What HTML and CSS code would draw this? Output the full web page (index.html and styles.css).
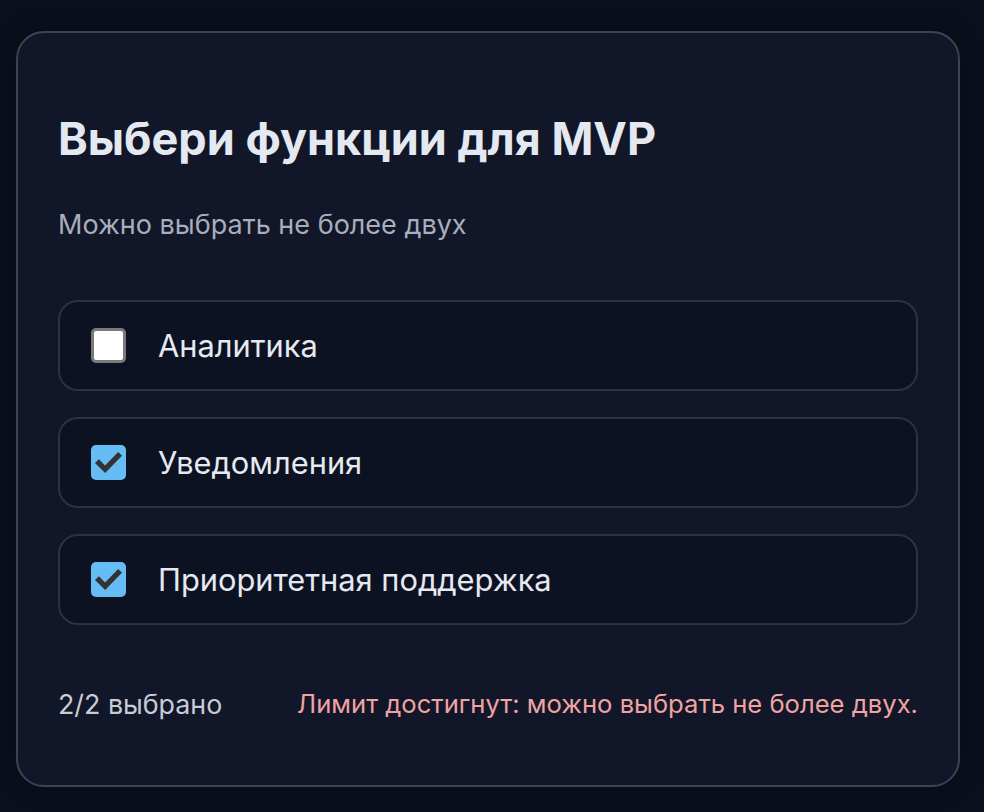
FILE: index.html
```html
<!DOCTYPE html>
<html lang="ru">
<head>
<meta charset="utf-8">
<title>Выбери функции для MVP</title>
<link rel="stylesheet" href="styles.css">
</head>
<body>
<main class="card">
  <h1 class="title">Выбери функции для MVP</h1>
  <p class="subtitle">Можно выбрать не более двух</p>
  <div class="options">
    <label class="option">
      <span class="box box-off"></span>
      <span class="label">Аналитика</span>
    </label>
    <label class="option">
      <span class="box box-on"><svg viewBox="0 0 36 36" width="35" height="35"><path d="M8 18.5 L14.5 25 L28 11" fill="none" stroke="#333" stroke-width="5.5" stroke-linecap="square" stroke-linejoin="miter"/></svg></span>
      <span class="label">Уведомления</span>
    </label>
    <label class="option">
      <span class="box box-on"><svg viewBox="0 0 36 36" width="35" height="35"><path d="M8 18.5 L14.5 25 L28 11" fill="none" stroke="#333" stroke-width="5.5" stroke-linecap="square" stroke-linejoin="miter"/></svg></span>
      <span class="label">Приоритетная поддержка</span>
    </label>
  </div>
  <div class="footer">
    <span class="count">2/2 выбрано</span>
    <span class="limit">Лимит достигнут: можно выбрать не более двух.</span>
  </div>
</main>
</body>
</html>
```
FILE: styles.css
```css
html, body {
  margin: 0;
  padding: 0;
  background: #0b101d;
}
body {
  padding: 31px 24px 25px 16px;
  font-family: Inter, "Noto Sans", sans-serif;
}
.card {
  box-sizing: border-box;
  width: 944px;
  height: 756px;
  background: #111628;
  border: 2px solid #3d4354;
  border-radius: 28px;
  padding: 0 40px;
  box-shadow: 0 0 24px rgba(0, 0, 0, 0.35);
  display: flex;
  flex-direction: column;
}
.title {
  margin: 78px 0 0;
  font-size: 45px;
  line-height: 56px;
  font-weight: 700;
  color: #e4e8f0;
}
.subtitle {
  margin: 42px 0 0;
  font-size: 27px;
  line-height: 32px;
  color: #a8aebb;
}
.options {
  margin-top: 59px;
  display: flex;
  flex-direction: column;
  gap: 26px;
}
.option {
  box-sizing: border-box;
  height: 91px;
  display: flex;
  align-items: center;
  gap: 32px;
  padding-left: 31px;
  background: #0d1222;
  border: 2px solid #2b3243;
  border-radius: 20px;
}
.box {
  box-sizing: border-box;
  width: 35px;
  height: 35px;
  border-radius: 5px;
  flex: none;
  display: block;
}
.box svg { display: block; }
.box-off {
  background: #ffffff;
  border: 3px solid #7a7a7a;
}
.box-on {
  background: #66bcf4;
}
.label {
  font-size: 30.8px;
  color: #e6e9f0;
}
.footer {
  margin-top: 63px;
  display: flex;
  justify-content: space-between;
  align-items: center;
  line-height: 32px;
}
.count {
  font-size: 26.8px;
  color: #c8ccd6;
}
.limit {
  font-size: 25.6px;
  color: #f0a3a3;
}
```
